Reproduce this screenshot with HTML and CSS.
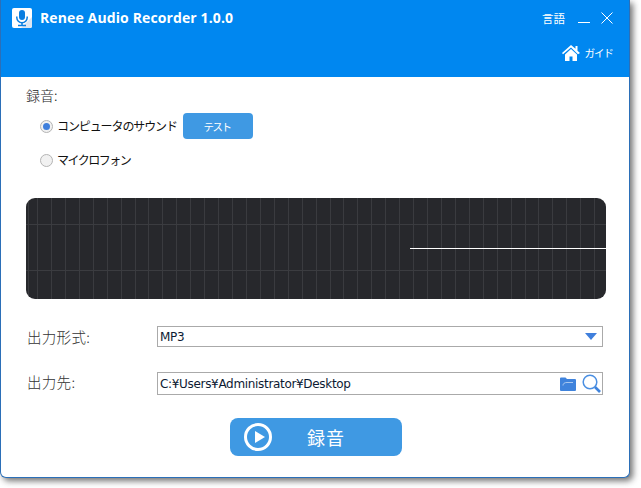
FILE: index.html
```html
<!DOCTYPE html>
<html lang="ja">
<head>
<meta charset="utf-8">
<title>Renee Audio Recorder</title>
<link rel="stylesheet" href="styles.css">
</head>
<body>
<div class="window">
  <header class="header">
    <div class="title-row">
      <svg class="logo" width="20" height="20" viewBox="0 0 20 20">
        <rect width="20" height="20" rx="2" fill="#fff"/>
        <path d="M9 20 L20 9 V18 a2 2 0 0 1-2 2Z" fill="#dce6f2"/>
        <rect x="7" y="2" width="6" height="10" rx="3" fill="#0a7ee0"/>
        <path d="M4.8 8.5v1a5.2 5.2 0 0 0 10.4 0v-1" fill="none" stroke="#0a7ee0" stroke-width="1.5"/>
        <path d="M10 15v2M6 17.5h8" stroke="#0a7ee0" stroke-width="1.5" fill="none"/>
      </svg>
      <span class="title">Renee Audio Recorder 1.0.0</span>
      <span class="lang">言語</span>
      <svg class="min" width="12" height="12" viewBox="0 0 12 12"><path d="M0 10.5h12" stroke="#fff" stroke-width="1"/></svg>
      <svg class="close" width="12" height="12" viewBox="0 0 12 12"><path d="M.5.5l11 11M11.500.5l-11 11" stroke="#fff" stroke-width="1"/></svg>
    </div>
    <div class="guide-row">
      <svg class="home" width="18" height="16" viewBox="0 0 18 16">
        <path d="M9 0L0 8l1 1.300L9 2.500l7 6.800L18 8l-2.500-2.300V1h-2v2.800Z" fill="#fff"/>
        <path d="M9 4l-6 5.500V16h4.500v-4.500h3V16H15V9.500Z" fill="#fff"/>
      </svg>
      <span class="guide">ガイド</span>
    </div>
  </header>
  <main class="content">
    <div class="section-label">録音:</div>
    <div class="radio-row first">
      <span class="radio checked"></span>
      <span class="radio-text">コンピュータのサウンド</span>
      <button class="test-btn">テスト</button>
    </div>
    <div class="radio-row second">
      <span class="radio"></span>
      <span class="radio-text tight">マイクロフォン</span>
    </div>
    <div class="scope"><div class="trace"></div></div>
    <div class="field format-field">
      <label class="field-label">出力形式:</label>
      <div class="input"><span class="value">MP3</span><span class="arrow"></span></div>
    </div>
    <div class="field dest-field">
      <label class="field-label">出力先:</label>
      <div class="input tall">
        <span class="value">C:¥Users¥Administrator¥Desktop</span>
        <svg class="folder" width="16" height="14" viewBox="0 0 16 14">
          <path d="M0 1.500a1 1 0 0 1 1-1h4.500l1.500 1.500h8a1 1 0 0 1 1 1V13a1 1 0 0 1-1 1H1a1 1 0 0 1-1-1Z" fill="#3f83dc"/>
          <path d="M3 8.500c0-2 1.500-3 4-3h6" fill="none" stroke="#a9c8f0" stroke-width="1"/>
        </svg>
        <svg class="search" width="20" height="20" viewBox="0 0 20 20">
          <circle cx="8" cy="8" r="6.800" fill="none" stroke="#4a8fe2" stroke-width="1.500"/>
          <path d="M13 13l5 5" stroke="#3f83dc" stroke-width="2.600"/>
        </svg>
      </div>
    </div>
    <div class="record-row">
      <button class="record-btn">
        <svg class="play" width="28" height="28" viewBox="0 0 28 28">
          <circle cx="14" cy="14" r="12.500" fill="none" stroke="#fff" stroke-width="3"/>
          <path d="M11 8L21 14L11 20Z" fill="#fff"/>
        </svg>
        <span class="record-text">録音</span>
      </button>
    </div>
  </main>
</div>
</body>
</html>
```
FILE: styles.css
```css
* { box-sizing: border-box; }
html, body { margin: 0; padding: 0; background: #fff; }
body {
  width: 641px;
  height: 488px;
  overflow: hidden;
  font-family: "Noto Sans CJK JP", "Noto Sans", sans-serif;
}
.window {
  width: 630px;
  height: 478px;
  background: #fff;
  border-left: 1px solid #2b6fb8;
  border-right: 1px solid #2b6fb8;
  border-bottom: 1px solid #2b6fb8;
  border-radius: 0 0 6px 6px;
  box-shadow: 3px 3px 6px rgba(40, 40, 40, 0.65);
  display: flex;
  flex-direction: column;
}
.header {
  height: 77px;
  background: #0087f0;
  color: #fff;
  padding: 8px 16px 0 11px;
  display: flex;
  flex-direction: column;
}
.title-row {
  display: flex;
  align-items: center;
  height: 20px;
}
.logo { flex: none; }
.title {
  margin-left: 8px;
  font: bold 14px/20px "Open Sans", sans-serif;
  letter-spacing: 0.120px;
  flex: 1;
}
.lang { font-size: 11.500px; line-height: 20px; margin-right: 13px; }
.min { margin-right: 11px; }
.guide-row {
  display: flex;
  justify-content: flex-end;
  align-items: center;
  margin-top: 16px;
  height: 18px;
}
.home { margin-right: 5px; }
.guide { font-size: 10.500px; line-height: 18px; letter-spacing: -1px; }
.content {
  flex: 1;
  display: flex;
  flex-direction: column;
  padding: 0 23px 0 25px;
  color: #222;
}
.section-label {
  font-size: 14px;
  font-weight: 300;
  line-height: 20px;
  margin-top: 8px;
}
.radio-row {
  display: flex;
  align-items: center;
  padding-left: 14px;
  color: #111;
}
.radio-row.first { height: 26px; margin-top: 8px; }
.radio-row.second { height: 20px; margin-top: 11px; }
.radio {
  width: 13px;
  height: 13px;
  border-radius: 50%;
  border: 1px solid #b4b4b4;
  background: #f1f1f1;
  flex: none;
  margin-right: 4px;
  position: relative;
}
.radio.checked::after {
  content: "";
  position: absolute;
  left: 2px;
  top: 2px;
  width: 7px;
  height: 7px;
  border-radius: 50%;
  background: #3f7fdc;
}
.radio-text { font-size: 12px; line-height: 20px; letter-spacing: -1.100px; }
.radio-text.tight { letter-spacing: -1.500px; }
.test-btn {
  width: 70px;
  height: 26px;
  margin-left: 6px;
  border: 0;
  border-radius: 4px;
  background: #3f99e3;
  color: #fff;
  font-family: inherit;
  font-size: 10.500px;
  letter-spacing: -1.500px;
  padding: 0 2px 0 0;
}
.scope {
  width: 580px;
  height: 101px;
  margin-top: 28px;
  border-radius: 9px;
  position: relative;
  overflow: hidden;
  background-color: #27282c;
  background-image:
    linear-gradient(#3b3c40, #3b3c40),
    linear-gradient(#3b3c40, #3b3c40),
    repeating-linear-gradient(90deg, #3a3b3f 0 1px, transparent 1px 13.930px);
  background-size: 100% 1px, 100% 1px, 100% 100%;
  background-position: 0 26px, 0 72px, 11px 0;
  background-repeat: no-repeat, no-repeat, repeat-x;
}
.trace {
  position: absolute;
  left: 384px;
  right: 0;
  top: 50px;
  height: 1px;
  background: #fff;
}
.field {
  display: flex;
  align-items: center;
}
.format-field { margin-top: 27px; height: 21px; }
.dest-field { margin-top: 25px; height: 23px; }
.field-label {
  width: 131px;
  padding-left: 1px;
  font-size: 14.500px;
  font-weight: 300;
  letter-spacing: 0.300px;
  line-height: 20px;
  color: #333;
}
.dest-field .field-label { margin-bottom: 3px; }
.input {
  width: 446px;
  height: 21px;
  border: 1px solid #aaa;
  display: flex;
  align-items: center;
  padding-left: 2px;
  background: #fff;
}
.input.tall { height: 23px; }
.value {
  flex: 1;
  font: 12px/18px "DejaVu Sans", sans-serif;
  letter-spacing: -0.320px;
  color: #0d1a33;
}
.arrow {
  width: 0;
  height: 0;
  border-left: 6px solid transparent;
  border-right: 6px solid transparent;
  border-top: 7px solid #3f7fdc;
  margin-right: 5px;
}
.folder { margin-right: 6px; }
.search { flex: none; }
.record-row {
  display: flex;
  justify-content: center;
  margin-top: 23px;
}
.record-btn {
  width: 172px;
  height: 38px;
  border: 0;
  border-radius: 8px;
  background: #3f99e3;
  color: #fff;
  display: flex;
  align-items: center;
  padding: 0 0 0 14px;
  font-family: inherit;
}
.record-text {
  font-size: 18px;
  line-height: 24px;
  margin-left: 35px;
  letter-spacing: 1px;
}
```
